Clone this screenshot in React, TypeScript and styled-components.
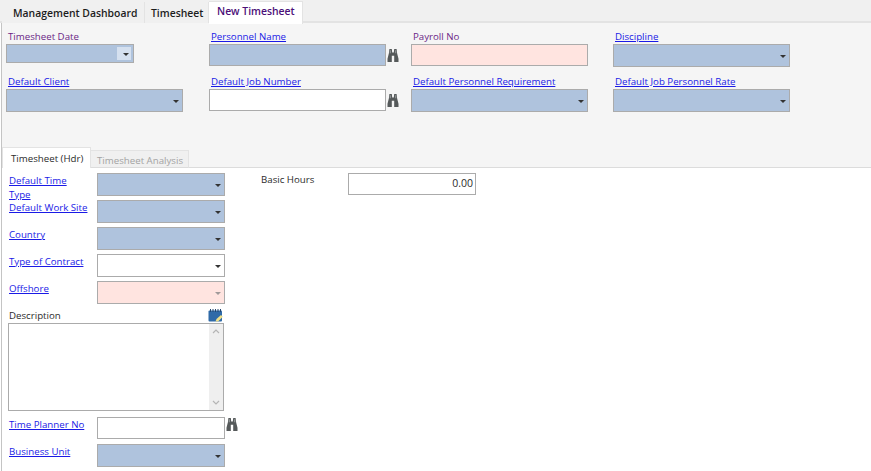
import React from "react";
import styled, { createGlobalStyle } from "styled-components";

const GlobalStyle = createGlobalStyle`
  html, body {
    margin: 0;
    padding: 0;
    background: #fff;
    overflow: hidden;
  }
  body {
    font-family: "Open Sans", "Noto Sans", sans-serif;
    font-size: 9.7px;
  }
`;

const Page = styled.div`
  width: 871px;
  height: 471px;
  overflow: hidden;
  background: #fff;
`;

const TabBar = styled.div`
  height: 23px;
  box-sizing: border-box;
  padding-left: 2px;
  background: #f0f0f0;
  border-bottom: 2px solid #e3e3e3;
  display: flex;
  align-items: flex-start;
`;

const TopTab = styled.div<{ $active?: boolean; $left: number; $w: number }>`
  width: ${(p) => p.$w}px;
  height: ${(p) => (p.$active ? "23px" : "21px")};
  margin-top: ${(p) => (p.$active ? "1px" : "2px")};
  box-sizing: border-box;
  padding: ${(p) => (p.$active ? "2px" : "4px")} 0 0 ${(p) => p.$left}px;
  background: ${(p) => (p.$active ? "#fff" : "#f0f0f0")};
  border-right: 1px solid #e3e3e3;
  border-top: ${(p) => (p.$active ? "1px solid #e3e3e3" : "none")};
  color: ${(p) => (p.$active ? "#4b0f78" : "#1c1c1c")};
  font-size: 10.4px;
  font-weight: 600;
  line-height: 15px;
  white-space: nowrap;
  position: relative;
`;

const Content = styled.div`
  margin-left: 1px;
  border-left: 1px solid #c4c4c4;
`;

const HeaderPanel = styled.div`
  height: 145px;
  box-sizing: border-box;
  background: #f5f5f5;
  display: flex;
  flex-direction: column;
  justify-content: space-between;
`;

const HeaderGrid = styled.div`
  display: grid;
  grid-template-columns: 203px repeat(3, 202px);
  grid-auto-rows: 45px;
  padding: 6px 0 0 4px;
`;

const HeaderField = styled.div`
  display: flex;
  flex-direction: column;
`;

const Caption = styled.span<{ $link?: boolean; $mandatory?: boolean }>`
  height: 15px;
  line-height: 15px;
  padding-left: 2px;
  font-size: 9.7px;
  white-space: nowrap;
  color: ${(p) => (p.$link ? "#1a1ae6" : p.$mandatory ? "#6b1f86" : "#2b2b2b")};
  text-decoration: ${(p) => (p.$link ? "underline" : "none")};
`;

const InputRow = styled.div<{ $top?: boolean }>`
  display: flex;
  align-items: ${(p) => (p.$top ? "flex-start" : "center")};
  gap: 1px;
`;

const Box = styled.div<{ $tone?: "blue" | "pink" | "white"; $w: number; $h?: number }>`
  position: relative;
  width: ${(p) => p.$w}px;
  height: ${(p) => p.$h ?? 22}px;
  box-sizing: border-box;
  flex: none;
  border: 1px solid #ababab;
  background: ${(p) =>
    p.$tone === "blue" ? "#afc3dd" : p.$tone === "pink" ? "#ffe4e0" : "#fff"};
`;

const Arrow = styled.span<{ $faded?: boolean }>`
  position: absolute;
  right: 3px;
  top: 50%;
  margin-top: -1px;
  width: 0;
  height: 0;
  border-left: 3px solid transparent;
  border-right: 3px solid transparent;
  border-top: 3px solid ${(p) => (p.$faded ? "#a09a9a" : "#333")};
`;

const DateButton = styled.span`
  position: absolute;
  right: 2px;
  top: 2px;
  bottom: 2px;
  width: 14px;
  background: #d5e0ef;
`;

const DateArrow = styled(Arrow)`
  right: 4px;
`;

const SubTabs = styled.div`
  display: flex;
  align-items: flex-end;
  height: 21px;
  border-bottom: 1px solid #dcdcdc;
  box-sizing: border-box;
`;

const SubTab = styled.div<{ $active?: boolean }>`
  box-sizing: border-box;
  height: ${(p) => (p.$active ? "21px" : "18px")};
  margin-bottom: -1px;
  padding: ${(p) => (p.$active ? "3px 0 0 8px" : "2px 0 0 6px")};
  width: ${(p) => (p.$active ? "89px" : "98px")};
  line-height: 15px;
  font-size: 9.7px;
  white-space: nowrap;
  color: ${(p) => (p.$active ? "#2b2b2b" : "#a3a3a3")};
  background: ${(p) => (p.$active ? "#fff" : "#f0f0f0")};
  border: 1px solid #e3e3e3;
  border-bottom: ${(p) => (p.$active ? "none" : "1px solid #dcdcdc")};
  border-left: ${(p) => (p.$active ? "1px solid #e3e3e3" : "none")};
`;

const Body = styled.div`
  display: flex;
  padding: 5px 0 0 6px;
`;

const LeftColumn = styled.div`
  width: 253px;
  flex: none;
  display: flex;
  flex-direction: column;
`;

const FormRow = styled.div<{ $h?: number }>`
  display: flex;
  height: ${(p) => p.$h ?? 27}px;
`;

const SideLabel = styled.a`
  width: 89px;
  flex: none;
  box-sizing: border-box;
  padding: 1px 7px 0 1px;
  font-size: 9.7px;
  line-height: 14px;
  color: #1a1ae6;
  text-decoration: underline;
`;

const DescriptionHead = styled.div`
  display: flex;
  justify-content: space-between;
  width: 217px;
  height: 15px;
  align-items: center;
  line-height: 15px;
  padding: 0 2px 0 1px;
  box-sizing: border-box;
  color: #2b2b2b;
  font-size: 9.7px;
`;

const TextArea = styled.div`
  position: relative;
  width: 216px;
  height: 88px;
  box-sizing: border-box;
  border: 1px solid #ababab;
  background: #fff;
  margin-bottom: 6px;
`;

const ScrollTrack = styled.div`
  position: absolute;
  top: 0;
  right: 0;
  bottom: 0;
  width: 14px;
  background: #efefef;
  display: flex;
  flex-direction: column;
  justify-content: space-between;
  align-items: center;
  padding: 5px 0;
  box-sizing: border-box;
`;

const HoursRow = styled.div`
  display: flex;
  align-items: flex-start;
`;

const HoursLabel = styled.span`
  width: 87px;
  line-height: 14px;
  color: #2b2b2b;
  font-size: 9.7px;
`;

const HoursValue = styled(Box)`
  text-align: right;
  padding-right: 2px;
  font-size: 10.5px;
  line-height: 19px;
  color: #2b2b2b;
`;

const Binoculars = () => (
  <svg width="12" height="15" viewBox="0 0 12 14" preserveAspectRatio="none" aria-hidden="true">
    <path
      fill="#55595a"
      d="M2.4 1h2.4l.4 3.2h1.6L7.2 1h2.4l.5 4 1.4 5V13H7.2V7.2H4.8V13H.5v-3l1.4-5z"
    />
    <path fill="#8b8f90" d="M2.8 2h1.2v3H2.6zM8 2h1.2l.2 3H8z" />
  </svg>
);

const NotebookIcon = () => (
  <svg width="15" height="13" viewBox="0 0 15 13" aria-hidden="true">
    <rect x="0.5" y="1.5" width="13.5" height="11" rx="1" fill="#2f6aa8" />
    <path stroke="#24476f" strokeWidth="1" d="M2.5 0v3M5 0v3M7.5 0v3M10 0v3M12.5 0v3" />
    <path fill="#efe08a" d="M7.5 12.5l1-2.4 4.5-4 1.8 1.6-4.7 4.8z" />
  </svg>
);

const ScrollChevron = ({ up }: { up?: boolean }) => (
  <svg width="8" height="5" viewBox="0 0 8 5" aria-hidden="true">
    <path
      d={up ? "M1 4l3-3 3 3" : "M1 1l3 3 3-3"}
      fill="none"
      stroke="#b5b5b5"
      strokeWidth="1.2"
    />
  </svg>
);

const Select = ({ tone, w, faded }: { tone?: "blue" | "pink" | "white"; w: number; faded?: boolean }) => (
  <Box $tone={tone} $w={w} $h={23}>
    <Arrow $faded={faded} />
  </Box>
);

const sideSelects = [
  { label: "Default Time Type", tone: "blue" as const },
  { label: "Default Work Site", tone: "blue" as const },
  { label: "Country", tone: "blue" as const },
  { label: "Type of Contract", tone: "white" as const },
  { label: "Offshore", tone: "pink" as const, faded: true },
];

const App = () => {
  return (
    <>
      <GlobalStyle />
      <Page>
        <TabBar>
          <TopTab $left={11} $w={143}>Management Dashboard</TopTab>
          <TopTab $left={6} $w={64}>Timesheet</TopTab>
          <TopTab $active $left={8} $w={94}>New Timesheet</TopTab>
        </TabBar>
        <Content>
          <HeaderPanel>
            <HeaderGrid>
              <HeaderField>
                <Caption $mandatory>Timesheet Date</Caption>
                <Box $tone="blue" $w={128} $h={19}>
                  <DateButton />
                  <DateArrow />
                </Box>
              </HeaderField>
              <HeaderField>
                <Caption $link>Personnel Name</Caption>
                <InputRow>
                  <Box $tone="blue" $w={177} />
                  <Binoculars />
                </InputRow>
              </HeaderField>
              <HeaderField>
                <Caption $mandatory>Payroll No</Caption>
                <Box $tone="pink" $w={177} />
              </HeaderField>
              <HeaderField>
                <Caption $link>Discipline</Caption>
                <Select tone="blue" w={177} />
              </HeaderField>
              <HeaderField>
                <Caption $link>Default Client</Caption>
                <Select tone="blue" w={177} />
              </HeaderField>
              <HeaderField>
                <Caption $link>Default Job Number</Caption>
                <InputRow>
                  <Box $w={177} />
                  <Binoculars />
                </InputRow>
              </HeaderField>
              <HeaderField>
                <Caption $link>Default Personnel Requirement</Caption>
                <Select tone="blue" w={177} />
              </HeaderField>
              <HeaderField>
                <Caption $link>Default Job Personnel Rate</Caption>
                <Select tone="blue" w={177} />
              </HeaderField>
            </HeaderGrid>
            <SubTabs>
              <SubTab $active>Timesheet (Hdr)</SubTab>
              <SubTab>Timesheet Analysis</SubTab>
            </SubTabs>
          </HeaderPanel>
          <Body>
            <LeftColumn>
              {sideSelects.map((row) => (
                <FormRow key={row.label}>
                  <SideLabel>{row.label}</SideLabel>
                  <Select tone={row.tone} w={128} faded={row.faded} />
                </FormRow>
              ))}
              <DescriptionHead>
                Description
                <NotebookIcon />
              </DescriptionHead>
              <TextArea>
                <ScrollTrack>
                  <ScrollChevron up />
                  <ScrollChevron />
                </ScrollTrack>
              </TextArea>
              <FormRow>
                <SideLabel>Time Planner No</SideLabel>
                <InputRow $top>
                  <Box $w={128} />
                  <Binoculars />
                </InputRow>
              </FormRow>
              <FormRow>
                <SideLabel>Business Unit</SideLabel>
                <Select tone="blue" w={128} />
              </FormRow>
            </LeftColumn>
            <HoursRow>
              <HoursLabel>Basic Hours</HoursLabel>
              <HoursValue $w={128}>0.00</HoursValue>
            </HoursRow>
          </Body>
        </Content>
      </Page>
    </>
  );
};

export default App;
